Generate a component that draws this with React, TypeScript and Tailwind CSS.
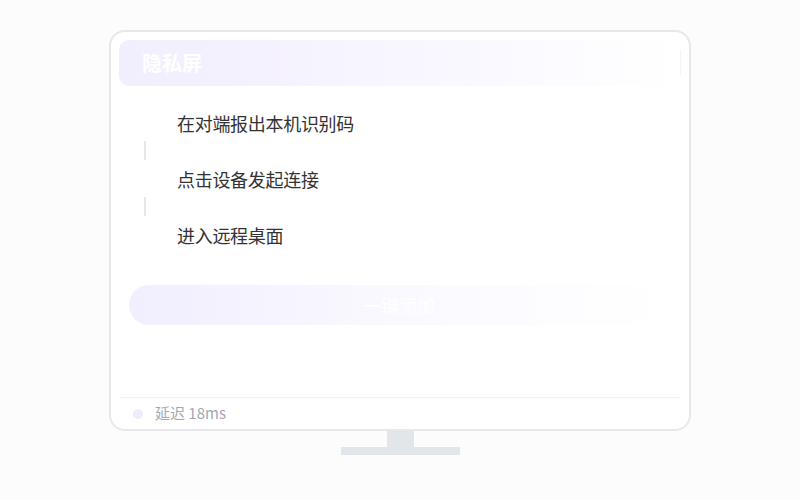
import React from "react";

const steps = ["在对端报出本机识别码", "点击设备发起连接", "进入远程桌面"];

export default function App() {
  return (
    <div
      className="flex h-[500px] w-full flex-col items-center bg-[#fcfcfd] pt-[30px]"
      style={{ fontFamily: '"Noto Sans CJK SC", "Noto Sans", sans-serif' }}
    >
      {/* screen */}
      <div className="flex h-[401px] w-[582px] flex-col rounded-[16px] border-2 border-[#e6e8eb] bg-white px-2 pt-2">
        <div className="relative flex h-[46px] items-center rounded-[10px] bg-gradient-to-r from-[#f1eefe] via-[#f8f6ff] to-white pl-[23px]">
          <span className="text-[20px] font-bold leading-none text-white">隐私屏</span>
          <div className="absolute right-0 top-[10px] h-[26px] w-px bg-[#f3f4f6]" />
        </div>

        {/* steps */}
        <div className="mt-[25px] flex flex-col pl-[14px]">
          {steps.map((s, i) => (
            <div key={s} className="flex flex-col">
              <div className="flex h-[24px] items-center gap-[20px]">
                <div className="flex w-[24px] justify-center">
                  <div className="h-[20px] w-[20px] rounded-full bg-white" />
                </div>
                <span className="text-[18px] leading-none tracking-[-0.3px] text-[#333333]">{s}</span>
              </div>
              {i < steps.length - 1 && (
                <div className="flex w-[24px] justify-center pb-[7px] pt-[6px]">
                  <div className="h-[19px] w-[2px] bg-[#e5e7eb]" />
                </div>
              )}
            </div>
          ))}
        </div>

        <button className="ml-[10px] mr-[12px] mt-[38px] flex h-[40px] items-center justify-center rounded-full bg-gradient-to-r from-[#f1eefe] via-[#faf9ff] to-white text-[18px] text-white">
          一键添加
        </button>

        <div className="flex-1" />

        <div className="h-px bg-[#eef0f3]" />
        <div className="flex h-[31px] items-center gap-[12px] pl-[14px]">
          <div className="h-[10px] w-[10px] rounded-full bg-[#efebfe]" />
          <span className="text-[15px] text-[#a3a8b0]">延迟 18ms</span>
        </div>
      </div>

      {/* stand */}
      <div className="h-[16px] w-[27px] bg-[#e2e5e9]" />
      <div className="h-[8px] w-[119px] bg-[#e2e5e9]" />
    </div>
  );
}
